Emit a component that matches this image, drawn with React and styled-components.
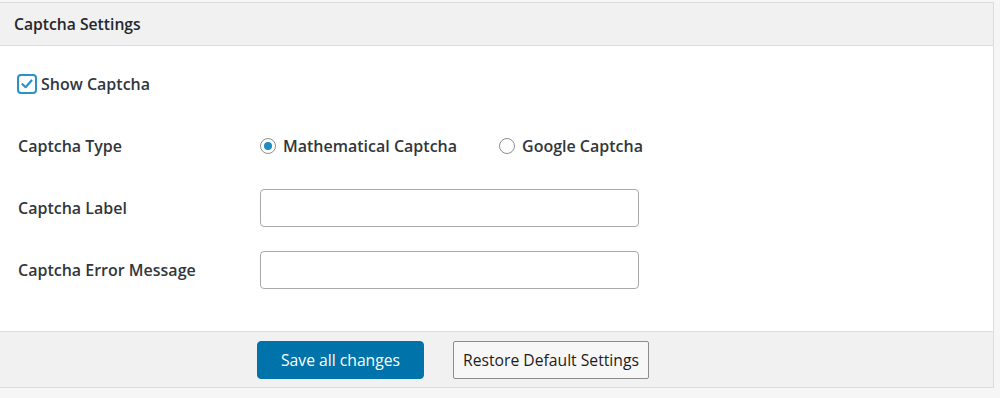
import styled, { createGlobalStyle } from "styled-components";

const GlobalStyle = createGlobalStyle`
  html, body {
    margin: 0;
    padding: 0;
    background: #f6f6f6;
    font-family: "Open Sans", "Liberation Sans", sans-serif;
    color: #32373c;
  }
`;

const Page = styled.div`
  width: 1000px;
  height: 398px;
  padding: 2px 6px 0 0;
  box-sizing: border-box;
`;

const Panel = styled.section`
  background: #fff;
  border: 1px solid #dcdcdc;
  border-left: none;
`;

const Header = styled.h2`
  margin: 0;
  height: 42px;
  padding: 0 14px;
  display: flex;
  align-items: center;
  background: #f1f1f1;
  border-bottom: 1px solid #dcdcdc;
  font-size: 15.7px;
  font-weight: 600;
  color: #23282d;
`;

const Body = styled.div`
  padding: 7px 18px 30px 17px;
`;

const Row = styled.div`
  display: grid;
  grid-template-columns: 243px 1fr;
  align-items: center;
  height: 62px;
`;

const Label = styled.label`
  font-size: 16px;
  font-weight: 600;
  color: #32373c;
  padding-left: 1px;
`;

const CheckLabel = styled.label`
  display: flex;
  align-items: center;
  gap: 4px;
  font-size: 16px;
  font-weight: 600;
  color: #32373c;
`;

const CheckBox = styled.span`
  width: 16px;
  height: 16px;
  border: 2px solid #2a91c9;
  border-radius: 4px;
  display: flex;
  align-items: center;
  justify-content: center;
  margin-top: -1px;
`;

const Radios = styled.div`
  display: flex;
  align-items: center;
  gap: 42px;
`;

const RadioLabel = styled.label`
  display: flex;
  align-items: center;
  gap: 7px;
  font-size: 16px;
  font-weight: 600;
  color: #32373c;
`;

const RadioDot = styled.span`
  width: 16px;
  height: 16px;
  border-radius: 50%;
  border: 1px solid #8c8f94;
  box-sizing: border-box;
  display: flex;
  align-items: center;
  justify-content: center;
  &::after {
    content: "";
    width: 8px;
    height: 8px;
    border-radius: 50%;
    background: ${(p) => (p.checked ? "#1e8cbe" : "transparent")};
  }
`;

const TextInput = styled.input`
  width: 379px;
  height: 38px;
  box-sizing: border-box;
  border: 1px solid #a7aaad;
  border-radius: 4px;
  background: #fff;
  outline: none;
`;

const Footer = styled.div`
  display: flex;
  align-items: center;
  gap: 29px;
  height: 55px;
  padding-left: 257px;
  background: #f1f1f1;
  border-top: 1px solid #dcdcdc;
`;

const Button = styled.button`
  height: 38px;
  padding: 0 ${(p) => (p.primary ? "23px" : "9px")};
  border-radius: ${(p) => (p.primary ? "4px" : "2px")};
  border: 1px solid ${(p) => (p.primary ? "#0073aa" : "#8c8c8c")};
  background: ${(p) => (p.primary ? "#0073aa" : "#f7f7f7")};
  color: ${(p) => (p.primary ? "#fff" : "#1d1d1d")};
  font-family: "Open Sans", "Liberation Sans", sans-serif;
  font-size: 15.7px;
  cursor: pointer;
`;

export default function App() {
  return (
    <Page>
      <GlobalStyle />
      <Panel>
        <Header>Captcha Settings</Header>
        <Body>
          <Row>
            <CheckLabel>
              <CheckBox>
                <svg width="12" height="12" viewBox="0 0 12 12">
                  <path d="M1.5 6.2 L4.6 9.2 L10.5 2.5" fill="none" stroke="#2a91c9" strokeWidth="2.2" strokeLinecap="round" strokeLinejoin="round" />
                </svg>
              </CheckBox>
              Show Captcha
            </CheckLabel>
          </Row>
          <Row>
            <Label>Captcha Type</Label>
            <Radios>
              <RadioLabel>
                <RadioDot checked />
                Mathematical Captcha
              </RadioLabel>
              <RadioLabel>
                <RadioDot />
                Google Captcha
              </RadioLabel>
            </Radios>
          </Row>
          <Row>
            <Label>Captcha Label</Label>
            <TextInput type="text" />
          </Row>
          <Row>
            <Label>Captcha Error Message</Label>
            <TextInput type="text" />
          </Row>
        </Body>
        <Footer>
          <Button primary>Save all changes</Button>
          <Button>Restore Default Settings</Button>
        </Footer>
      </Panel>
    </Page>
  );
}
